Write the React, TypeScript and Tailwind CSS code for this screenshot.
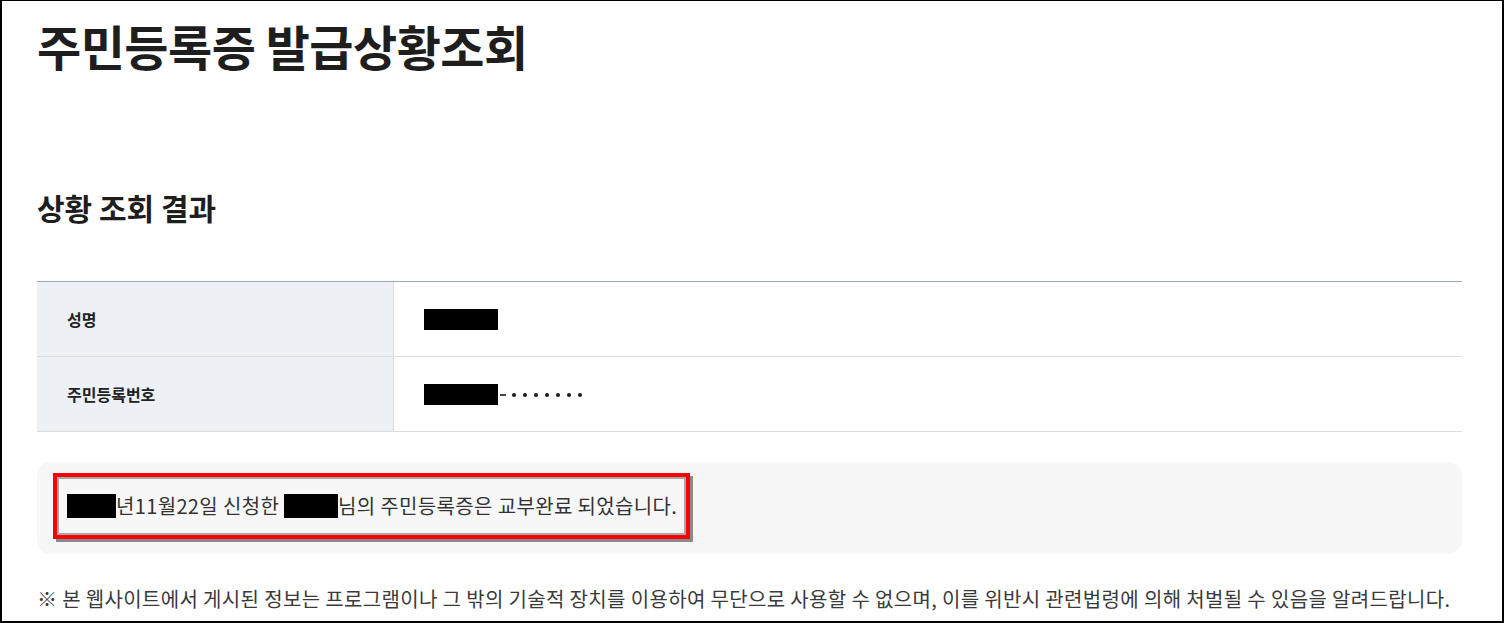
import React from "react";

const font = { fontFamily: '"Noto Sans CJK KR", "Noto Sans", sans-serif' };

function Redact({ w, h }: { w: number; h: number }) {
  return <span className="inline-block bg-black align-middle" style={{ width: w, height: h }} />;
}

export default function App() {
  const dots = [0, 1, 2, 3, 4, 5, 6];
  return (
    <div
      className="w-[1504px] h-[623px] overflow-hidden bg-white border-t border-l-2 border-r-2 border-b-2 border-black box-border"
      style={font}
    >
      <div className="pl-[35px] pr-[40px]">
        <h1 className="mt-[14px] text-[48px] leading-[60px] font-bold text-[#1e1e1e] tracking-[-0.5px]">
          주민등록증 발급상황조회
        </h1>
        <h2 className="mt-[112px] text-[30px] leading-[40px] font-bold text-[#1e1e1e]">상황 조회 결과</h2>
        <div className="mt-[54px] border-t border-[#98a9c0]">
          <div className="flex h-[75px] border-b border-[#dcdcdc]">
            <div className="w-[357px] bg-[#edf0f4] border-r border-[#dcdcdc] flex items-center pl-[30px] text-[16px] font-bold text-[#222]">
              성명
            </div>
            <div className="flex-1 flex items-center pl-[30px]">
              <Redact w={74} h={21} />
            </div>
          </div>
          <div className="flex h-[75px] border-b border-[#dcdcdc]">
            <div className="w-[357px] bg-[#edf0f4] border-r border-[#dcdcdc] flex items-center pl-[30px] text-[16px] font-bold text-[#222]">
              주민등록번호
            </div>
            <div className="flex-1 flex items-center pl-[30px]">
              <Redact w={74} h={21} />
              <span className="ml-[2px] mt-[1px] w-[6px] h-[2px] bg-[#444]" />
              <span className="ml-[6px] mt-[2px] flex gap-[7px]">
                {dots.map((d) => (
                  <span key={d} className="w-[4px] h-[4px] rounded-full bg-[#1a1a1a]" />
                ))}
              </span>
            </div>
          </div>
        </div>
        <div className="mt-[30px] h-[92px] rounded-[14px] bg-[#f7f7f7] pl-[16px] pt-[11px]">
          <div className="inline-block border-4 border-[#ff0000] shadow-[3px_3px_0_#8a8a8a]">
            <div className="border-2 border-[#a8a8a8] w-[629px] h-[58px] flex items-center pl-[8px] text-[20px] text-[#333] tracking-[0.35px]">
              <Redact w={49} h={24} />
              <span>년11월22일 신청한&nbsp;</span>
              <Redact w={54} h={24} />
              <span>님의 주민등록증은 교부완료 되었습니다.</span>
            </div>
          </div>
        </div>
        <p className="mt-[32px] text-[20px] leading-[26px] text-[#3a3a3a] tracking-[0.35px] whitespace-nowrap">
          ※ 본 웹사이트에서 게시된 정보는 프로그램이나 그 밖의 기술적 장치를 이용하여 무단으로 사용할 수 없으며, 이를 위반시 관련법령에 의해 처벌될 수 있음을 알려드랍니다.
        </p>
      </div>
    </div>
  );
}
